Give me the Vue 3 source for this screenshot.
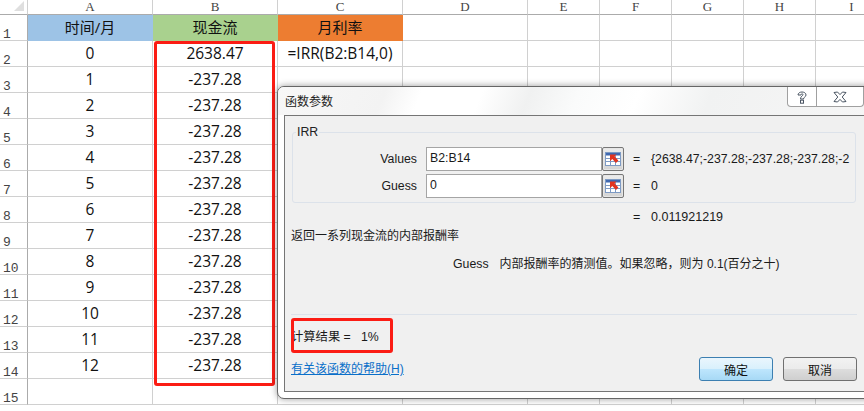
<script setup>
const colWidths = [125, 125, 125, 125, 72, 72, 72, 72, 72]
const colNames = ['A', 'B', 'C', 'D', 'E', 'F', 'G', 'H', 'I']
const values = [
  ['0', '2638.47', '=IRR(B2:B14,0)'],
  ['1', '-237.28', ''],
  ['2', '-237.28', ''],
  ['3', '-237.28', ''],
  ['4', '-237.28', ''],
  ['5', '-237.28', ''],
  ['6', '-237.28', ''],
  ['7', '-237.28', ''],
  ['8', '-237.28', ''],
  ['9', '-237.28', ''],
  ['10', '-237.28', ''],
  ['11', '-237.28', ''],
  ['12', '-237.28', ''],
  ['', '', '']
]
const fills = ['fill-blue', 'fill-green', 'fill-orange']
const heads = ['时间/月', '现金流', '月利率']
const args = [
  { name: 'Values', input: 'B2:B14', result: '{2638.47;-237.28;-237.28;-237.28;-2' },
  { name: 'Guess', input: '0', result: '0' }
]
const gridCols = '28px ' + colWidths.map((w) => w + 'px').join(' ')
</script>

<template>
  <div class="screen">
    <div class="sheet" :style="{ gridTemplateColumns: gridCols }">
      <div class="corner"><span class="tri"></span></div>
      <div v-for="c in colNames" :key="c" class="col-head">{{ c }}</div>

      <div class="row-head r1">1</div>
      <div v-for="(h, i) in heads" :key="h" class="cell title" :class="fills[i]">{{ h }}</div>
      <div v-for="c in 6" :key="'e' + c" class="cell"></div>

      <template v-for="(row, r) in values" :key="r">
        <div class="row-head">{{ r + 2 }}</div>
        <div v-for="(v, i) in row" :key="i" class="cell">{{ v }}</div>
        <div v-for="c in 6" :key="'x' + c" class="cell"></div>
      </template>
    </div>

    <div class="mark mark-col"></div>

    <div class="dialog">
      <div class="titlebar">
        <span class="title-text">函数参数</span>
        <div class="winbtns">
          <div class="winbtn help">
            <svg width="12" height="14" viewBox="0 0 12 14">
              <path d="M2 5 C2 1 10 1 10 5 C10 7 7.5 7 7.5 9 L4.5 9 C4.5 6 7 6 7 4.6 C7 3.6 5 3.6 5 5 Z" fill="#fff" stroke="#4a5563" stroke-width="1"/>
              <rect x="4.5" y="10.2" width="3" height="3" fill="#fff" stroke="#4a5563"/>
            </svg>
          </div>
          <div class="winbtn close">
            <svg width="14" height="12" viewBox="0 0 14 12">
              <path d="M1 1.5 L4.5 1 L7 3.6 L9.5 1 L13 1.5 L9.2 6 L13 10.5 L9.5 11 L7 8.4 L4.5 11 L1 10.5 L4.8 6 Z" fill="#fff" stroke="#4a5563" stroke-width="1"/>
            </svg>
          </div>
        </div>
      </div>

      <div class="panel">
        <fieldset class="group">
          <legend>IRR</legend>
          <div v-for="a in args" :key="a.name" class="arg">
            <span class="arg-name">{{ a.name }}</span>
            <span class="arg-input">{{ a.input }}</span>
            <span class="ref-btn">
              <svg width="16" height="14" viewBox="0 0 16 14">
                <rect x="0.5" y="0.5" width="15" height="13" fill="#fff" stroke="#7d9ac4"/>
                <rect x="1" y="1" width="14" height="2.5" fill="#3f68b0"/>
                <path d="M1 6.5H15M1 9.5H15M5.5 3.5V13.5M10.5 3.5V13.5" stroke="#7d9ac4" fill="none"/>
                <path d="M5 2.5 L11.5 2.5 L9.6 4.6 L13.4 8.6 L11 11 L7.3 7 L5 9.2 Z" fill="#e2331f"/>
              </svg>
            </span>
            <span class="eq">=</span>
            <span class="arg-result">{{ a.result }}</span>
          </div>
        </fieldset>

        <div class="total"><span class="eq">=</span><span>0.011921219</span></div>
        <div class="desc">返回一系列现金流的内部报酬率</div>
        <div class="guess"><span class="guess-name">Guess</span>内部报酬率的猜测值。如果忽略，则为 0.1(百分之十)</div>
        <div class="divider"></div>
        <div class="calc">计算结果 =&nbsp;&nbsp; 1%</div>
        <div class="foot">
          <a class="link">有关该函数的帮助(H)</a>
          <div class="actions">
            <button class="btn primary">确定</button>
            <button class="btn">取消</button>
          </div>
        </div>
      </div>
      <div class="mark mark-calc"></div>
    </div>
  </div>
</template>

<style scoped>
.screen {
  position: relative;
  width: 864px;
  height: 411px;
  overflow: hidden;
  background: #fff;
  font-family: "Open Sans", "Noto Sans CJK SC", sans-serif;
}
.sheet {
  display: grid;
  grid-auto-rows: 26px;
  grid-template-rows: 15px;
}
.corner,
.col-head {
  background: #fff;
  border-bottom: 1px solid #ababab;
  border-right: 1px solid #d0d0d0;
}
.corner {
  display: flex;
  justify-content: flex-end;
  align-items: flex-end;
  padding: 0 3px 3px 0;
}
.tri {
  width: 10px;
  height: 10px;
  background: #dfdfdf;
  clip-path: polygon(100% 0, 100% 100%, 0 100%);
}
.col-head {
  font: 13px/14px "Liberation Serif", serif;
  color: #444;
  text-align: center;
}
.row-head {
  border-right: 1px solid #ababab;
  border-bottom: 1px solid #d0d0d0;
  font: 13px/11px "Liberation Mono", monospace;
  color: #444;
  display: flex;
  align-items: flex-end;
  padding: 0 0 0 3px;
}
.cell {
  border-right: 1px solid #d0d0d0;
  border-bottom: 1px solid #d0d0d0;
  font-size: 15.5px;
  line-height: 24px;
  text-align: center;
  color: #111;
  white-space: nowrap;
}
.title {
  font-size: 15px;
  border-color: transparent;
}
.fill-blue { background: #9dc3e6; }
.fill-green { background: #a9d18e; }
.fill-orange { background: #ed7d31; }

.mark {
  position: absolute;
  border: 3px solid #fb1c14;
  border-radius: 3px;
  box-sizing: border-box;
}
.mark-col {
  left: 154px;
  top: 41px;
  width: 121px;
  height: 345px;
}

.dialog {
  position: absolute;
  left: 277px;
  top: 86px;
  width: 597px;
  height: 313px;
  box-sizing: border-box;
  border: 1px solid #666;
  border-radius: 7px;
  background: #fff;
  box-shadow: 0 0 7px rgba(0, 0, 0, 0.4);
  font-family: "Liberation Sans", "Noto Sans CJK SC", sans-serif;
  font-size: 12px;
  color: #1a1a1a;
}
.titlebar {
  height: 28px;
  display: flex;
  justify-content: space-between;
  background: linear-gradient(112deg, #f7f7f7 0%, #f3f3f3 18%, #fff 24%, #fff 34%, #f0f1f1 42%, #fafbfb 50%, #fff 60%, #f1f2f2 72%, #f6f6f6 100%);
  border-radius: 6px 6px 0 0;
}
.title-text {
  margin: 7px 0 0 7px;
  font-size: 12px;
  line-height: 17px;
  color: #222;
}
.winbtns {
  display: flex;
  height: 19px;
  margin-right: 9px;
  border: 1px solid #a0a0a0;
  border-top: 0;
  border-radius: 0 0 4px 4px;
  background: #fff;
}
.winbtn {
  display: flex;
  align-items: center;
  justify-content: center;
}
.help {
  width: 28px;
  border-right: 1px solid #a0a0a0;
}
.close {
  width: 46px;
}
.panel {
  margin: 0 0 0 6px;
  height: 277px;
  box-sizing: border-box;
  border: 1px solid #757575;
  background: #f0f0f0;
  padding: 0 15px 0 6px;
}
.group {
  margin: 9px 1px 0 1px;
  padding: 8px 0 0 0;
  height: 78px;
  box-sizing: border-box;
  border: 1px solid #dce2ea;
  border-radius: 3px;
}
.group legend {
  margin-left: 3px;
  padding: 0 1px;
  font-size: 12.3px;
  line-height: 14px;
  color: #222;
}
.arg {
  display: flex;
  align-items: center;
  height: 24px;
  margin-bottom: 3px;
  font-size: 12.3px;
}
.arg-name {
  width: 124px;
  text-align: right;
}
.arg-input {
  width: 176px;
  height: 24px;
  box-sizing: border-box;
  margin-left: 9px;
  border: 1px solid #a5a5a5;
  background: #fff;
  padding-left: 3px;
  line-height: 20px;
}
.ref-btn {
  width: 22px;
  height: 24px;
  box-sizing: border-box;
  border: 1px solid #777;
  border-radius: 2px;
  box-shadow: inset 0 0 0 1px #e6e6e6;
  background: linear-gradient(#ececec, #d4d4d4);
  display: flex;
  align-items: center;
  justify-content: center;
}
.eq {
  width: 18px;
  flex: none;
}
.arg .eq {
  margin-left: 9px;
}
.arg-result {
  white-space: nowrap;
}
.total {
  display: flex;
  height: 18px;
  line-height: 18px;
  margin-top: 5px;
  padding-left: 342px;
  font-size: 12.5px;
}
.desc {
  height: 18px;
  line-height: 18px;
  margin-top: 1px;
}
.guess {
  height: 18px;
  line-height: 18px;
  margin-top: 10px;
  padding-left: 162px;
  white-space: nowrap;
}
.guess-name {
  margin-right: 11px;
  font-size: 12.3px;
}
.divider {
  height: 1px;
  margin-top: 41px;
  background: #dce2ea;
}
.calc {
  height: 18px;
  line-height: 18px;
  margin-top: 13px;
  font-size: 12.3px;
}
.foot {
  display: flex;
  justify-content: space-between;
  align-items: center;
  margin-top: 10px;
}
.link {
  color: #0a6fc9;
  text-decoration: underline;
  font-size: 12px;
  line-height: 26px;
}
.actions {
  display: flex;
  gap: 10px;
}
.btn {
  width: 74px;
  height: 24px;
  padding: 0;
  border: 1px solid #707070;
  border-radius: 3px;
  font: 12px "Liberation Sans", "Noto Sans CJK SC", sans-serif;
  color: #111;
  background: linear-gradient(#f2f2f2 0%, #ebebeb 49%, #dddddd 50%, #cfcfcf 100%);
}
.primary {
  border-color: #3c7fb1;
  background: linear-gradient(#eaf6fd 0%, #d9f0fc 49%, #bee6fd 50%, #a7d9f5 100%);
}
.mark-calc {
  left: 13px;
  top: 231px;
  width: 102px;
  height: 35px;
}
</style>
